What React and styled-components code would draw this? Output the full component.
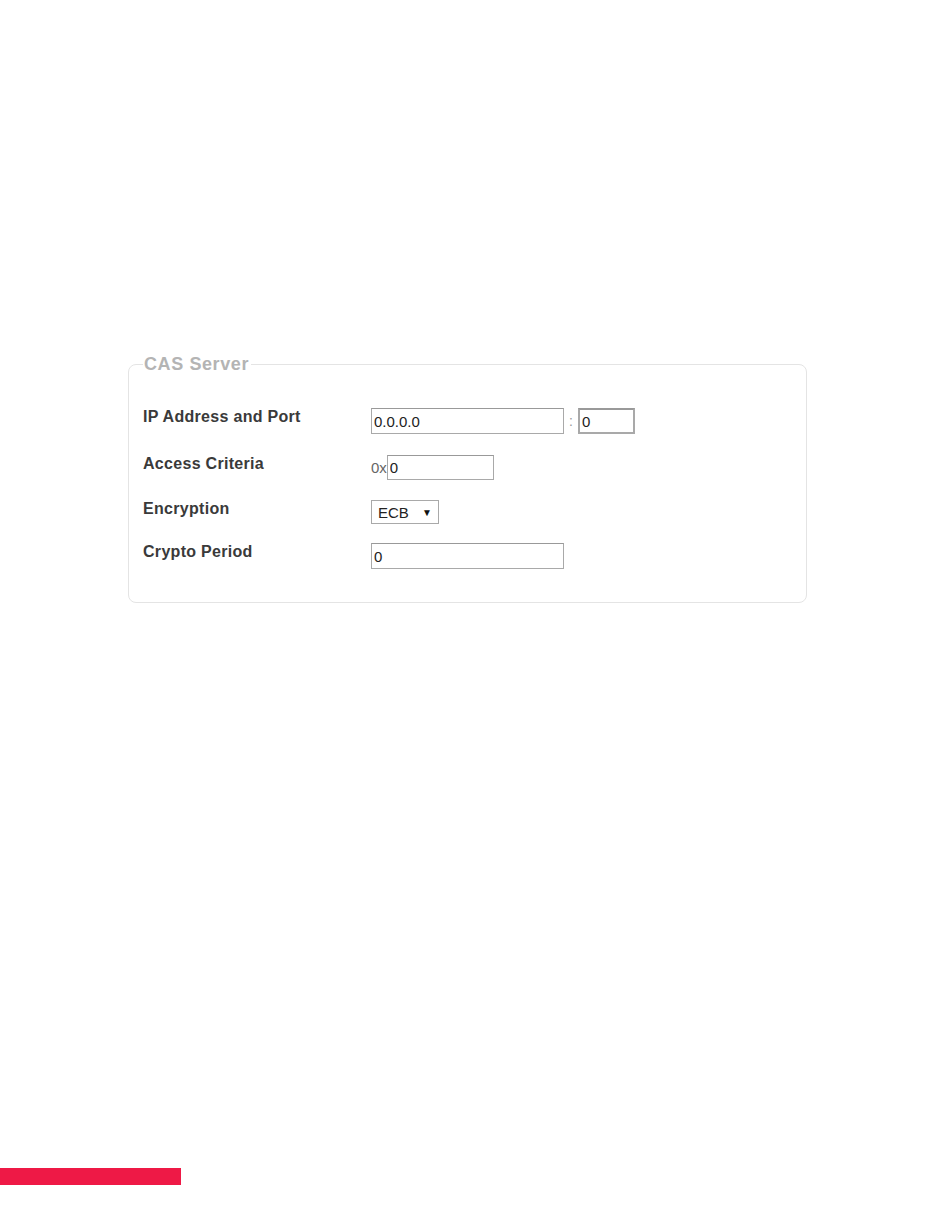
import React from 'react';
import styled, { createGlobalStyle } from 'styled-components';

const GlobalStyle = createGlobalStyle`
  html, body {
    margin: 0;
    padding: 0;
    background: #fff;
  }
  body {
    font-family: "Liberation Sans", Arial, sans-serif;
  }
`;

const Page = styled.div`
  width: 950px;
  height: 1229px;
  display: flex;
  flex-direction: column;
`;

const Content = styled.div`
  padding: 354px 0 0 128px;
  flex: 1;
`;

const Fieldset = styled.fieldset`
  width: 679px;
  box-sizing: border-box;
  margin: 0;
  padding: 33px 14px 33px 14px;
  border: 1px solid #e4e4e4;
  border-radius: 8px;
`;

const Legend = styled.legend`
  padding: 0 2px 0 1px;
  margin-left: 0;
  font-size: 18px;
  line-height: 21px;
  font-weight: bold;
  color: #b4b4b4;
  letter-spacing: 0.6px;
`;

const Grid = styled.div`
  display: grid;
  grid-template-columns: 228px 1fr;
  align-items: start;
`;

const Label = styled.div`
  font-size: 16px;
  font-weight: bold;
  color: #3a3a3a;
  letter-spacing: 0.3px;
  line-height: 18px;
  margin-bottom: ${p => p.$gap}px;
`;

const Control = styled.div`
  display: flex;
  align-items: center;
  font-size: 14px;
  color: #555;
  margin-bottom: ${p => p.$gap}px;
`;

const TextInput = styled.input`
  box-sizing: border-box;
  width: ${p => p.$w}px;
  height: ${p => p.$h || 26}px;
  padding: 1px 2px;
  margin: 0;
  font-family: "Liberation Sans", Arial, sans-serif;
  font-size: 15px;
  color: #222;
  border: ${p => (p.$focus ? '2px solid #a9a9a9' : '1px solid #a9a9a9')};
  border-top-color: #999;
  background: #fff;
  outline: none;
`;

const Sep = styled.span`
  margin: 0 5px 0 5px;
  color: #999;
  font-size: 14px;
`;

const Prefix = styled.span`
  color: #666;
  font-size: 15px;
`;

const Select = styled.div`
  box-sizing: border-box;
  width: 68px;
  height: 24px;
  border: 1px solid #a9a9a9;
  display: flex;
  align-items: center;
  padding: 0 6px;
  justify-content: space-between;
  font-size: 15px;
  color: #222;
`;

const Caret = styled.span`
  font-size: 10px;
  color: #111;
`;

const Bar = styled.div`
  width: 181px;
  height: 17px;
  background: #ee1946;
  margin-bottom: 44px;
`;

export default function App() {
  return (
    <Page>
      <GlobalStyle />
      <Content>
        <Fieldset>
          <Legend>CAS Server</Legend>
          <Grid>
            <Label $gap={21}>IP Address and Port</Label>
            <Control $gap={21}>
              <TextInput $w={193} defaultValue="0.0.0.0" />
              <Sep>:</Sep>
              <TextInput $w={57} $focus defaultValue="0" />
            </Control>

            <Label $gap={20}>Access Criteria</Label>
            <Control $gap={20}>
              <Prefix>0x</Prefix>
              <TextInput $w={107} $h={25} defaultValue="0" />
            </Control>

            <Label $gap={19}>Encryption</Label>
            <Control $gap={19}>
              <Select>
                <span>ECB</span>
                <Caret>▼</Caret>
              </Select>
            </Control>

            <Label $gap={0}>Crypto Period</Label>
            <Control $gap={0}>
              <TextInput $w={193} defaultValue="0" />
            </Control>
          </Grid>
        </Fieldset>
      </Content>
      <Bar />
    </Page>
  );
}
